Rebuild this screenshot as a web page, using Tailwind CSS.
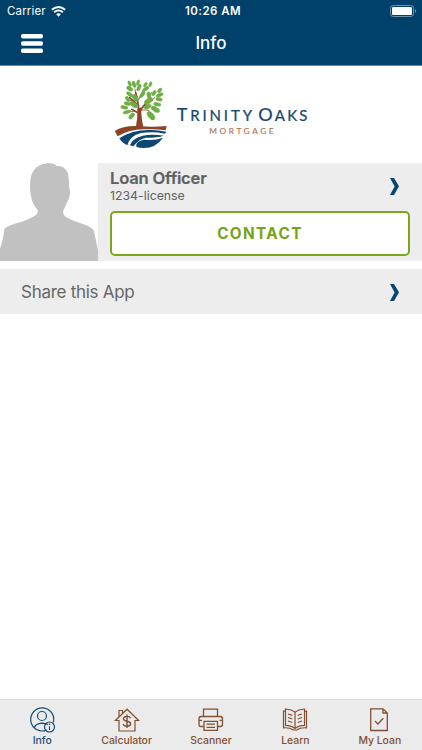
<!DOCTYPE html>
<html lang="en">
<head>
<meta charset="utf-8">
<title>Info</title>
<script src="https://cdn.jsdelivr.net/npm/@tailwindcss/browser@4"></script>
</head>
<body class="w-[422px] h-[750px] flex flex-col bg-white overflow-hidden font-[Inter,'Liberation_Sans',sans-serif]">
<header class="h-[66px] shrink-0 bg-[#00416b] text-white border-b border-[#668da6]">
  <div class="h-[22px] grid grid-cols-3 items-center px-[7px]">
    <div class="flex items-center gap-[6px] text-[11.5px] leading-[22px] tracking-[0.15px]"><span>Carrier</span>
      <svg class="-ml-px" width="15" height="11" viewBox="0 0 15 11" fill="none" stroke="white" stroke-width="1.8"><path d="M.8 3.7Q7.5-1.8 14.2 3.7M3.1 6.2Q7.5 2.6 11.9 6.2"/><path d="M5 8.1Q7.5 6.2 10 8.1L7.5 10.7Z" fill="white" stroke="none"/></svg>
    </div>
    <div class="text-center text-[11.5px] font-semibold leading-[22px] tracking-[0.45px] whitespace-nowrap pl-[4px]">10:26 AM</div>
    <svg class="justify-self-end -mr-[2px]" width="27" height="12" viewBox="0 0 27 12"><rect x=".5" y=".5" width="23" height="11" rx="2.7" fill="none" stroke="#6d93ab"/><rect x="2" y="2" width="20" height="8" rx="1.2" fill="white"/><path d="M25 4Q27.5 6 25 8Z" fill="#6d93ab"/></svg>
  </div>
  <div class="h-[43px] grid grid-cols-3 items-center px-[21px]">
    <svg width="22" height="19" viewBox="0 0 22 19" fill="white"><rect width="22" height="4.6" rx="1.8"/><rect y="7.2" width="22" height="4.6" rx="1.8"/><rect y="14.4" width="22" height="4.6" rx="1.8"/></svg>
    <h1 class="text-center text-[17px] font-medium leading-[43px]">Info</h1>
  </div>
</header>
<main class="flex-1 flex flex-col">
  <div class="h-[97px] flex pl-[105px] pt-[4px]">
    <svg width="210" height="90" viewBox="0 0 630 270">
      <g fill="none" stroke="#8b4526" stroke-linecap="round">
        <path stroke-width="5" d="M103 137L100 108Q98 84 92 68M104 125Q117 102 142 90M96 127Q91 124 80 118M101 107Q86 94 74 83"/>
        <path stroke-width="2.5" d="M92 70L90 57M100 91Q109 76 113 62M113 107Q138 97 149 83M134 94Q132 78 139 67M110 120Q122 119 132 121M89 123Q79 126 70 124M85 93L70 91"/>
      </g>
      <path fill="#8b4526" d="M97 116Q98 145 93 169L115 169Q108 145 109 112ZM29 183Q58 165 106 169Q143 172 185 168L182 181Q155 177 125 178Q78 175 38 199Z"/>
      <g fill="#6fae45" stroke="#6fae45" stroke-width="1.5">
        <ellipse cx="74" cy="56" rx="10" ry="6" transform="rotate(35 74 56)"/><ellipse cx="74" cy="41" rx="9" ry="4" transform="rotate(65 74 41)"/><ellipse cx="87" cy="43" rx="10" ry="5" transform="rotate(70 87 43)"/><ellipse cx="99" cy="38" rx="9" ry="4" transform="rotate(110 99 38)"/><ellipse cx="102" cy="53" rx="11" ry="5" transform="rotate(115 102 53)"/><ellipse cx="121" cy="44" rx="8" ry="4" transform="rotate(125 121 44)"/><ellipse cx="122" cy="57" rx="11" ry="5" transform="rotate(145 122 57)"/><ellipse cx="136" cy="43" rx="8" ry="4" transform="rotate(110 136 43)"/><ellipse cx="112" cy="74" rx="11" ry="5" transform="rotate(130 112 74)"/><ellipse cx="74" cy="73" rx="11" ry="5" transform="rotate(35 74 73)"/><ellipse cx="91" cy="84" rx="12" ry="7" transform="rotate(55 91 84)"/><ellipse cx="68" cy="87" rx="9" ry="5" transform="rotate(60 68 87)"/><ellipse cx="87" cy="104" rx="14" ry="7" transform="rotate(30 87 104)"/><ellipse cx="67" cy="101" rx="10" ry="5" transform="rotate(15 67 101)"/><ellipse cx="58" cy="112" rx="11" ry="5" transform="rotate(10 58 112)"/><ellipse cx="66" cy="126" rx="12" ry="5" transform="rotate(-15 66 126)"/><ellipse cx="80" cy="138" rx="11" ry="6" transform="rotate(130 80 138)"/><ellipse cx="132" cy="76" rx="10" ry="6" transform="rotate(80 132 76)"/><ellipse cx="147" cy="69" rx="9" ry="5" transform="rotate(120 147 69)"/><ellipse cx="164" cy="61" rx="8" ry="5" transform="rotate(130 164 61)"/><ellipse cx="164" cy="75" rx="11" ry="5" transform="rotate(-25 164 75)"/><ellipse cx="162" cy="88" rx="10" ry="5" transform="rotate(10 162 88)"/><ellipse cx="130" cy="93" rx="14" ry="7" transform="rotate(145 130 93)"/><ellipse cx="157" cy="103" rx="11" ry="5" transform="rotate(10 157 103)"/><ellipse cx="128" cy="110" rx="11" ry="6" transform="rotate(155 128 110)"/><ellipse cx="151" cy="118" rx="14" ry="7" transform="rotate(30 151 118)"/><ellipse cx="138" cy="137" rx="15" ry="8" transform="rotate(50 138 137)"/>
      </g>
      <g fill="#0d4774"><path d="M43 205Q83 178 138 180Q162 180 184 185L180 191Q145 184 108 189Q74 197 67 226Q50 218 43 205Z"/><path d="M75 226Q79 207 113 197Q142 191 176 197Q158 203 123 203Q102 207 85 229Z"/><path d="M94 230Q90 214 118 209Q151 212 174 203Q153 234 116 234Q101 234 94 230Z"/></g>
      <g class="font-[Lato,sans-serif]">
        <g fill="#14466f" stroke="#14466f" stroke-width=".7"><text x="215" y="154" font-size="54" textLength="226" lengthAdjust="spacing">T<tspan font-size="45">RINITY</tspan></text><text x="460" y="154" font-size="54" textLength="147" lengthAdjust="spacing">O<tspan font-size="45">AKS</tspan></text></g>
        <text x="313" y="191" font-size="25" fill="#ad7350" stroke="#ad7350" stroke-width=".4" textLength="193" lengthAdjust="spacing">MORTGAGE</text>
      </g>
    </svg>
  </div>
  <section class="h-[98px] flex bg-[#ededed]">
    <svg class="bg-white shrink-0" width="98" height="98" viewBox="0 0 98 98"><path fill="#c1c1c1" d="M0 98V86Q3 77 4.5 66Q5 64 14 61Q29 57 36 52Q38.5 50 37.5 47Q32 40 31 33Q29 24 31 13Q35 1 48 0Q54 0 57 3Q64 2 68 10Q69 16 69 24Q71 29 69 35Q66 42 63.5 47Q62 51 66 54Q73 58 83 61Q92 64 94 68Q96 79 98 87V98Z"/></svg>
    <div class="flex-1 pl-[12px] pr-[12px]">
      <div class="h-[48px] flex justify-between">
        <div class="pt-[5px] text-[#606060]"><h2 class="text-[16.6px] leading-[20px] tracking-[-0.2px] font-semibold [-webkit-text-stroke:0.2px_#606060] whitespace-nowrap">Loan Officer</h2><p class="text-[12.3px] leading-[15px]">1234-license</p></div>
        <svg class="mt-[15px] mr-[11px]" width="9" height="17" viewBox="0 0 9 17"><path fill="#074672" d="M0 0H4L9 8.2L4 17H0L4.6 8.5Z"/></svg>
      </div>
      <button class="block w-full h-[45px] rounded-[5px] border-2 border-[#7ba71f] bg-white text-[#74a415] text-[15.3px] font-bold tracking-[1.4px] leading-[41px]">CONTACT</button>
    </div>
  </section>
  <section class="mt-[8px] h-[45px] bg-[#ededed] flex items-center justify-between pl-[21px] pr-[23px]">
    <span class="text-[17px] tracking-[-0.28px] pt-[2px] text-[#666]">Share this App</span>
    <svg class="mt-[2px]" width="9" height="17" viewBox="0 0 9 17"><path fill="#074672" d="M0 0H4L9 8.2L4 17H0L4.6 8.5Z"/></svg>
  </section>
</main>
<nav class="h-[51px] shrink-0 bg-[#ebebeb] border-t border-[#d8d8d8] grid grid-cols-5 text-[10.4px] leading-[15px] font-medium text-[#805032] whitespace-nowrap">
  <div class="flex flex-col items-center pt-[6px] text-[#174f77]"><svg width="28" height="27" viewBox="0 0 28 27" fill="none" stroke="currentColor" stroke-width="1.2"><path d="M18.5 24.1A11.5 11.5 0 1 1 25.3 16.5M6.3 22Q7.5 17.5 14 17.2Q18 17.3 20 18.6"/><circle cx="14" cy="10" r="4.5"/><circle cx="21.5" cy="21" r="5"/><path d="M21.5 20.2V24M21.5 17.6V19"/></svg><span>Info</span></div>
  <div class="flex flex-col items-center pt-[6px]"><svg width="28" height="27" viewBox="0 0 28 27" fill="none" stroke="currentColor" stroke-width="1.2"><path d="M6 14.5V25H22V14.5H25.6L14 3.2L2.4 14.5ZM6 10.7V4.5H9.5V7.4"/><path d="M14 8.5V22M17.7 12.2Q17 10.4 14 10.4Q10.4 10.5 10.5 13Q10.8 14.9 14 15.2Q17.6 15.6 17.6 17.8Q17.5 20.3 14 20.3Q10.9 20.3 10.2 18.1" stroke-width="1.4"/></svg><span>Calculator</span></div>
  <div class="flex flex-col items-center pt-[6px]"><svg width="28" height="27" viewBox="0 0 28 27" fill="none" stroke="currentColor" stroke-width="1.3"><path d="M6.5 10.5V3.2H20.5V10.5M7 20.5H4Q2 20.5 2 18.5V12.7Q2 10.5 4.2 10.5H23Q25.5 10.5 25.5 12.7V18.5Q25.5 20.5 23.5 20.5H20.5M2 14.3H5M22.5 14.3H25.5M7 15.3H20.5V24.3H7ZM9.5 18.2H18M9.5 21.3H18"/></svg><span>Scanner</span></div>
  <div class="flex flex-col items-center pt-[6px]"><svg width="28" height="27" viewBox="0 0 28 27" fill="none" stroke="currentColor" stroke-width="1.2"><path d="M14 6.3Q11 3.5 4.5 3V19.3Q11 19.7 14 22.5Q17 19.7 23.5 19.3V3Q17 3.5 14 6.3ZM14 6.3V22.5M4.5 5.2H2.5V21.8Q9 21.4 12.3 24H15.7Q19 21.4 25.5 21.8V5.2H23.5"/><path d="M7 8L11.3 9.4M7 11.5L11.3 13M7 15L11.3 16.5M21 8L16.7 9.4M21 11.5L16.7 13M21 15L16.7 16.5"/></svg><span>Learn</span></div>
  <div class="flex flex-col items-center pt-[6px]"><svg class="-ml-px" width="28" height="27" viewBox="0 0 28 27" fill="none" stroke="currentColor" stroke-width="1.3"><path d="M5.7 2.8H18L22.3 7V24.5H5.7ZM18 2.8V7H22.3M10 15L13 18L18.3 12.3"/></svg><span>My Loan</span></div>
</nav>
</body>
</html>
